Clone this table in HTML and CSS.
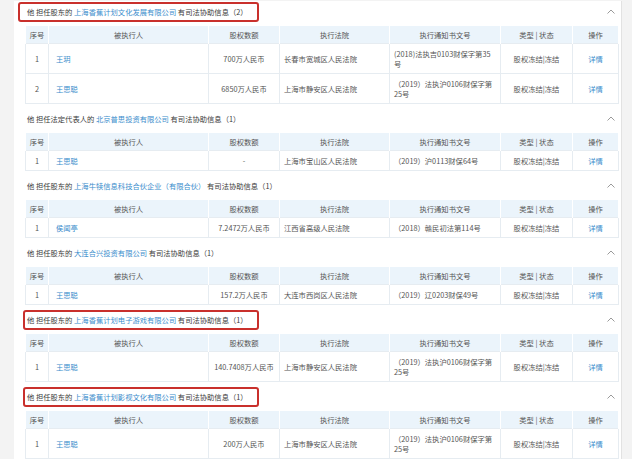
FILE: index.html
```html
<!DOCTYPE html>
<html lang="zh">
    <head>
        <meta charset="UTF-8">
        <meta name="viewport" content="width=device-width, initial-scale=1.0">
        <title>司法协助信息</title>
        <link rel="stylesheet" href="styles.css">
    </head>
    <body>
        <div id="page">
            <div class="panel">

                <div class="block first">
                    <div class="head">
                        <span class="title mark wide">他 担任股东的 <a>上海香蕉计划文化发展有限公司</a> 有司法协助信息（2）</span>
                        <span class="fold"><svg width="8" height="5" viewBox="0 0 8 5"><polyline points="0.5,4.5 4,1 7.5,4.5"/></svg></span>
                    </div>
                    <table class="grid">
                        <colgroup><col class="c1"><col class="c2"><col class="c3"><col class="c4"><col class="c5"><col class="c6"><col class="c7"></colgroup>
                        <tr><th>序号</th><th>被执行人</th><th>股权数额</th><th>执行法院</th><th>执行通知书文号</th><th>类型 | 状态</th><th>操作</th></tr>
                        <tr class="tall"><td class="mid">1</td><td><a>王玥</a></td><td class="mid">700万人民币</td><td>长春市宽城区人民法院</td><td>(2018)法执吉0103财保字第35号</td><td class="mid">股权冻结|冻结</td><td class="mid"><a>详情</a></td></tr>
                        <tr class="tall"><td class="mid">2</td><td><a>王思聪</a></td><td class="mid">6850万人民币</td><td>上海市静安区人民法院</td><td>（2019）法执沪0106财保字第25号</td><td class="mid">股权冻结|冻结</td><td class="mid"><a>详情</a></td></tr>
                    </table>
                </div>

                <div class="block">
                    <div class="head">
                        <span class="title">他 担任法定代表人的 <a>北京普思投资有限公司</a> 有司法协助信息（1）</span>
                        <span class="fold"><svg width="8" height="5" viewBox="0 0 8 5"><polyline points="0.5,4.5 4,1 7.5,4.5"/></svg></span>
                    </div>
                    <table class="grid">
                        <colgroup><col class="c1"><col class="c2"><col class="c3"><col class="c4"><col class="c5"><col class="c6"><col class="c7"></colgroup>
                        <tr><th>序号</th><th>被执行人</th><th>股权数额</th><th>执行法院</th><th>执行通知书文号</th><th>类型 | 状态</th><th>操作</th></tr>
                        <tr><td class="mid">1</td><td><a>王思聪</a></td><td class="mid">-</td><td>上海市宝山区人民法院</td><td>（2019）沪0113财保64号</td><td class="mid">股权冻结|冻结</td><td class="mid"><a>详情</a></td></tr>
                    </table>
                </div>

                <div class="block">
                    <div class="head">
                        <span class="title">他 担任股东的 <a>上海牛犊信息科技合伙企业（有限合伙）</a> 有司法协助信息（1）</span>
                        <span class="fold"><svg width="8" height="5" viewBox="0 0 8 5"><polyline points="0.5,4.5 4,1 7.5,4.5"/></svg></span>
                    </div>
                    <table class="grid">
                        <colgroup><col class="c1"><col class="c2"><col class="c3"><col class="c4"><col class="c5"><col class="c6"><col class="c7"></colgroup>
                        <tr><th>序号</th><th>被执行人</th><th>股权数额</th><th>执行法院</th><th>执行通知书文号</th><th>类型 | 状态</th><th>操作</th></tr>
                        <tr><td class="mid">1</td><td><a>侯闻亭</a></td><td class="mid">7.2472万人民币</td><td>江西省高级人民法院</td><td>（2018）赣民初法第114号</td><td class="mid">股权冻结|冻结</td><td class="mid"><a>详情</a></td></tr>
                    </table>
                </div>

                <div class="block">
                    <div class="head">
                        <span class="title">他 担任股东的 <a>大连合兴投资有限公司</a> 有司法协助信息（1）</span>
                        <span class="fold"><svg width="8" height="5" viewBox="0 0 8 5"><polyline points="0.5,4.5 4,1 7.5,4.5"/></svg></span>
                    </div>
                    <table class="grid">
                        <colgroup><col class="c1"><col class="c2"><col class="c3"><col class="c4"><col class="c5"><col class="c6"><col class="c7"></colgroup>
                        <tr><th>序号</th><th>被执行人</th><th>股权数额</th><th>执行法院</th><th>执行通知书文号</th><th>类型 | 状态</th><th>操作</th></tr>
                        <tr><td class="mid">1</td><td><a>王思聪</a></td><td class="mid">157.2万人民币</td><td>大连市西岗区人民法院</td><td>（2019）辽0203财保49号</td><td class="mid">股权冻结|冻结</td><td class="mid"><a>详情</a></td></tr>
                    </table>
                </div>

                <div class="block">
                    <div class="head">
                        <span class="title mark">他 担任股东的 <a>上海香蕉计划电子游戏有限公司</a> 有司法协助信息（1）</span>
                        <span class="fold"><svg width="8" height="5" viewBox="0 0 8 5"><polyline points="0.5,4.5 4,1 7.5,4.5"/></svg></span>
                    </div>
                    <table class="grid">
                        <colgroup><col class="c1"><col class="c2"><col class="c3"><col class="c4"><col class="c5"><col class="c6"><col class="c7"></colgroup>
                        <tr><th>序号</th><th>被执行人</th><th>股权数额</th><th>执行法院</th><th>执行通知书文号</th><th>类型 | 状态</th><th>操作</th></tr>
                        <tr class="tall"><td class="mid">1</td><td><a>王思聪</a></td><td class="mid">140.7408万人民币</td><td>上海市静安区人民法院</td><td>（2019）法执沪0106财保字第25号</td><td class="mid">股权冻结|冻结</td><td class="mid"><a>详情</a></td></tr>
                    </table>
                </div>

                <div class="block">
                    <div class="head">
                        <span class="title mark">他 担任股东的 <a>上海香蕉计划影视文化有限公司</a> 有司法协助信息（1）</span>
                        <span class="fold"><svg width="8" height="5" viewBox="0 0 8 5"><polyline points="0.5,4.5 4,1 7.5,4.5"/></svg></span>
                    </div>
                    <table class="grid">
                        <colgroup><col class="c1"><col class="c2"><col class="c3"><col class="c4"><col class="c5"><col class="c6"><col class="c7"></colgroup>
                        <tr><th>序号</th><th>被执行人</th><th>股权数额</th><th>执行法院</th><th>执行通知书文号</th><th>类型 | 状态</th><th>操作</th></tr>
                        <tr class="tall"><td class="mid">1</td><td><a>王思聪</a></td><td class="mid">200万人民币</td><td>上海市静安区人民法院</td><td>（2019）法执沪0106财保字第25号</td><td class="mid">股权冻结|冻结</td><td class="mid"><a>详情</a></td></tr>
                    </table>
                </div>

            </div>
        </div>
    </body>
</html>
```

FILE: styles.css
```css
* {
    margin: 0;
    padding: 0;
    box-sizing: border-box;
}

body, html {
    height: 100%;
    overflow: hidden;
}

body {
    background: #f3f3f3;
    font-family: "Noto Sans CJK SC", "Noto Sans", sans-serif;
    font-size: 7.3px;
    color: #555;
}

a {
    color: #3a8dcc;
    text-decoration: none;
}

#page {
    height: 100%;
    padding: 0 10px 0 14px;
}

.panel {
    height: 100%;
    background: #fff;
    border-right: 1px solid #e2e2e2;
    padding: 0 4px 0 11px;
}

.head {
    display: flex;
    align-items: center;
    justify-content: space-between;
    height: 21px;
    margin: 4px 0 3px;
}
.first .head {
    margin-top: 1px;
}

.title {
    color: #3b3b3b;
    line-height: 16px;
    border: 2px solid transparent;
    border-radius: 3px;
    padding: 0 9px 0 2px;
    margin-left: -2px;
}
.title.mark {
    border-color: #c9302c;
}
.title.wide {
    padding-left: 7px;
    margin-left: -7px;
}

.fold {
    display: flex;
    margin-right: 2px;
}
.fold polyline {
    fill: none;
    stroke: #9a9a9a;
    stroke-width: 1;
}

.grid {
    width: 593px;
    table-layout: fixed;
    border-collapse: collapse;
    font-size: 7.3px;
}
.c1 { width: 23px; }
.c2 { width: 160px; }
.c3 { width: 71px; }
.c4 { width: 110px; }
.c5 { width: 111px; }
.c6 { width: 72px; }
.c7 { width: 46px; }

.grid th {
    height: 18px;
    background: #ebf4fb;
    border: 1px solid #fff;
    border-bottom: 0;
    font-weight: normal;
    color: #555;
    text-align: center;
}

.grid td {
    height: 20px;
    border: 1px solid #e6ecf1;
    padding: 0 4px;
    line-height: 10px;
    vertical-align: middle;
    color: #555;
}
.grid td:nth-child(2) {
    padding-left: 7px;
}
.grid .tall td {
    height: 30px;
}
.grid td.mid {
    text-align: center;
}
```
